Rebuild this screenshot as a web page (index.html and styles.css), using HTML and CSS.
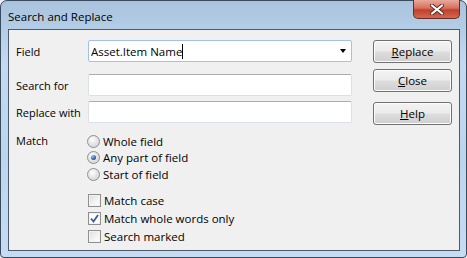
FILE: index.html
```html
<!DOCTYPE html>
<html lang="en">

<head>
    <meta charset="UTF-8">
    <title>Search and Replace</title>
    <link rel="stylesheet" href="styles.css">
</head>

<body>

    <main class="window">
        <header class="titlebar">
            <span class="title">Search and Replace</span>
            <button class="close-x" aria-label="Close">
                <svg width="14" height="11" viewBox="0 0 14 11">
                    <path d="M2 1.5 L12 9.5 M12 1.5 L2 9.5" stroke="#5b2a22" stroke-width="4" stroke-linecap="round" />
                    <path d="M2 1.5 L12 9.5 M12 1.5 L2 9.5" stroke="#ffffff" stroke-width="2.2" stroke-linecap="round" />
                </svg>
            </button>
        </header>

        <section class="client">
            <div class="form">
                <div class="row">
                    <span class="label">Field</span>
                    <div class="combo">
                        <span class="combo-text">Asset.Item Name</span><span class="caret"></span>
                        <span class="arrow"></span>
                    </div>
                </div>
                <div class="row row-search">
                    <span class="label">Search for</span>
                    <input class="textbox" type="text">
                </div>
                <div class="row row-replace">
                    <span class="label">Replace with</span>
                    <input class="textbox" type="text">
                </div>

                <div class="match">
                    <span class="label">Match</span>
                    <div class="options">
                        <div class="radios">
                            <label class="opt"><span class="radio"></span>Whole field</label>
                            <label class="opt"><span class="radio on"></span>Any part of field</label>
                            <label class="opt"><span class="radio"></span>Start of field</label>
                        </div>
                        <div class="checks">
                            <label class="opt"><span class="check"></span>Match case</label>
                            <label class="opt"><span class="check on">
                                <svg width="9" height="9" viewBox="0 0 9 9">
                                    <path d="M1 4.5 L3.5 7.5 L8 1" fill="none" stroke="#3d5a98" stroke-width="1.8" />
                                </svg>
                            </span>Match whole words only</label>
                            <label class="opt"><span class="check"></span>Search marked</label>
                        </div>
                    </div>
                </div>
            </div>

            <div class="buttons">
                <button class="btn"><u>R</u>eplace</button>
                <button class="btn"><u>C</u>lose</button>
                <button class="btn btn-help"><u>H</u>elp</button>
            </div>
        </section>
    </main>

</body>

</html>
```

FILE: styles.css
```css
* {
    margin: 0;
    padding: 0;
    box-sizing: border-box;
    font-family: 'Open Sans', sans-serif;
}

body {
    width: 467px;
    height: 258px;
    background-color: #e9eef4;
    overflow: hidden;
}

.window {
    width: 467px;
    height: 258px;
    border: 1px solid #3a4b5e;
    border-radius: 7px 7px 4px 4px;
    background: linear-gradient(to bottom, #a9c3de 0%, #c3daf1 25%, #bcd5ee 60%, #c5dcf3 100%);
    display: flex;
    flex-direction: column;
}

.titlebar {
    height: 28px;
    display: flex;
    align-items: center;
    justify-content: space-between;
    padding-left: 7px;
    padding-right: 6px;
}

.title {
    font-size: 11.5px;
    color: #000;
    margin-top: 2px;
}

.close-x {
    width: 47px;
    height: 19px;
    align-self: flex-start;
    margin-top: -1px;
    border: 1px solid #6b2b24;
    border-top: none;
    border-radius: 0 0 5px 5px;
    background: linear-gradient(to bottom, #e9a99b 0%, #d8705f 45%, #c1402c 55%, #cf6a4f 100%);
    display: flex;
    align-items: center;
    justify-content: center;
}

.client {
    height: 222px;
    margin: 0 6px 0 7px;
    border: 1px solid #4d5a6b;
    background-color: #f0f0f0;
    display: flex;
    padding: 10px 7px 0 7px;
    font-size: 11px;
    color: #000;
}

.form {
    width: 336px;
}

.row {
    display: flex;
    align-items: center;
    height: 22px;
}

.row-search {
    margin-top: 12px;
}

.row-replace {
    margin-top: 5px;
}

.label {
    width: 72px;
    flex-shrink: 0;
}

.combo {
    width: 264px;
    height: 22px;
    border: 1px solid #a2c2df;
    border-radius: 2px;
    background: #fff;
    display: flex;
    align-items: center;
    padding-left: 2px;
    font-size: 11.5px;
}

.caret {
    width: 1px;
    height: 15px;
    background: #000;
}

.arrow {
    margin-left: auto;
    margin-right: 5px;
    width: 0;
    height: 0;
    border-left: 3.5px solid transparent;
    border-right: 3.5px solid transparent;
    border-top: 4px solid #000;
}

.textbox {
    width: 264px;
    height: 22px;
    border: 1px solid #dbdfe6;
    border-top-color: #abadb3;
    border-radius: 2px;
    background: #fff;
    outline: none;
}

.match {
    display: flex;
    margin-top: 10px;
}

.match .label {
    height: 16.5px;
    line-height: 16.5px;
    width: 71px;
}

.opt {
    display: flex;
    align-items: center;
    font-size: 11.5px;
}

.radios .opt {
    height: 16.5px;
}

.checks {
    margin-top: 8.5px;
    padding-left: 1px;
}

.checks .opt {
    height: 18px;
}

.radio {
    width: 13px;
    height: 13px;
    border-radius: 50%;
    border: 1px solid #8e8f8f;
    background: radial-gradient(circle at 40% 35%, #ffffff 0%, #e6e6e6 45%, #cfcfcf 100%);
    margin-right: 3px;
    display: flex;
    align-items: center;
    justify-content: center;
}

.radio.on::after {
    content: "";
    width: 5px;
    height: 5px;
    border-radius: 50%;
    background: radial-gradient(circle at 35% 30%, #8fc3ee 0%, #2a62a6 60%, #173f7a 100%);
}

.check {
    width: 13px;
    height: 13px;
    border: 1px solid #8e8f8f;
    background: linear-gradient(135deg, #dcdcdc 0%, #f4f4f4 60%, #ffffff 100%);
    box-shadow: inset 0 0 0 1px #f2f2f2;
    margin-right: 3px;
    display: flex;
    align-items: center;
    justify-content: center;
}

.check.on {
    background: #fff;
}

.buttons {
    margin-left: 21px;
    display: flex;
    flex-direction: column;
}

.btn {
    width: 79px;
    height: 23px;
    border: 1px solid #707070;
    border-radius: 3px;
    background: linear-gradient(to bottom, #f3f3f3 0%, #ebebeb 48%, #dddddd 52%, #cfcfcf 100%);
    box-shadow: inset 0 0 0 1px #fcfcfc;
    font-size: 11.5px;
    color: #000;
    margin-bottom: 6px;
}

.btn-help {
    margin-top: 4px;
}
```
